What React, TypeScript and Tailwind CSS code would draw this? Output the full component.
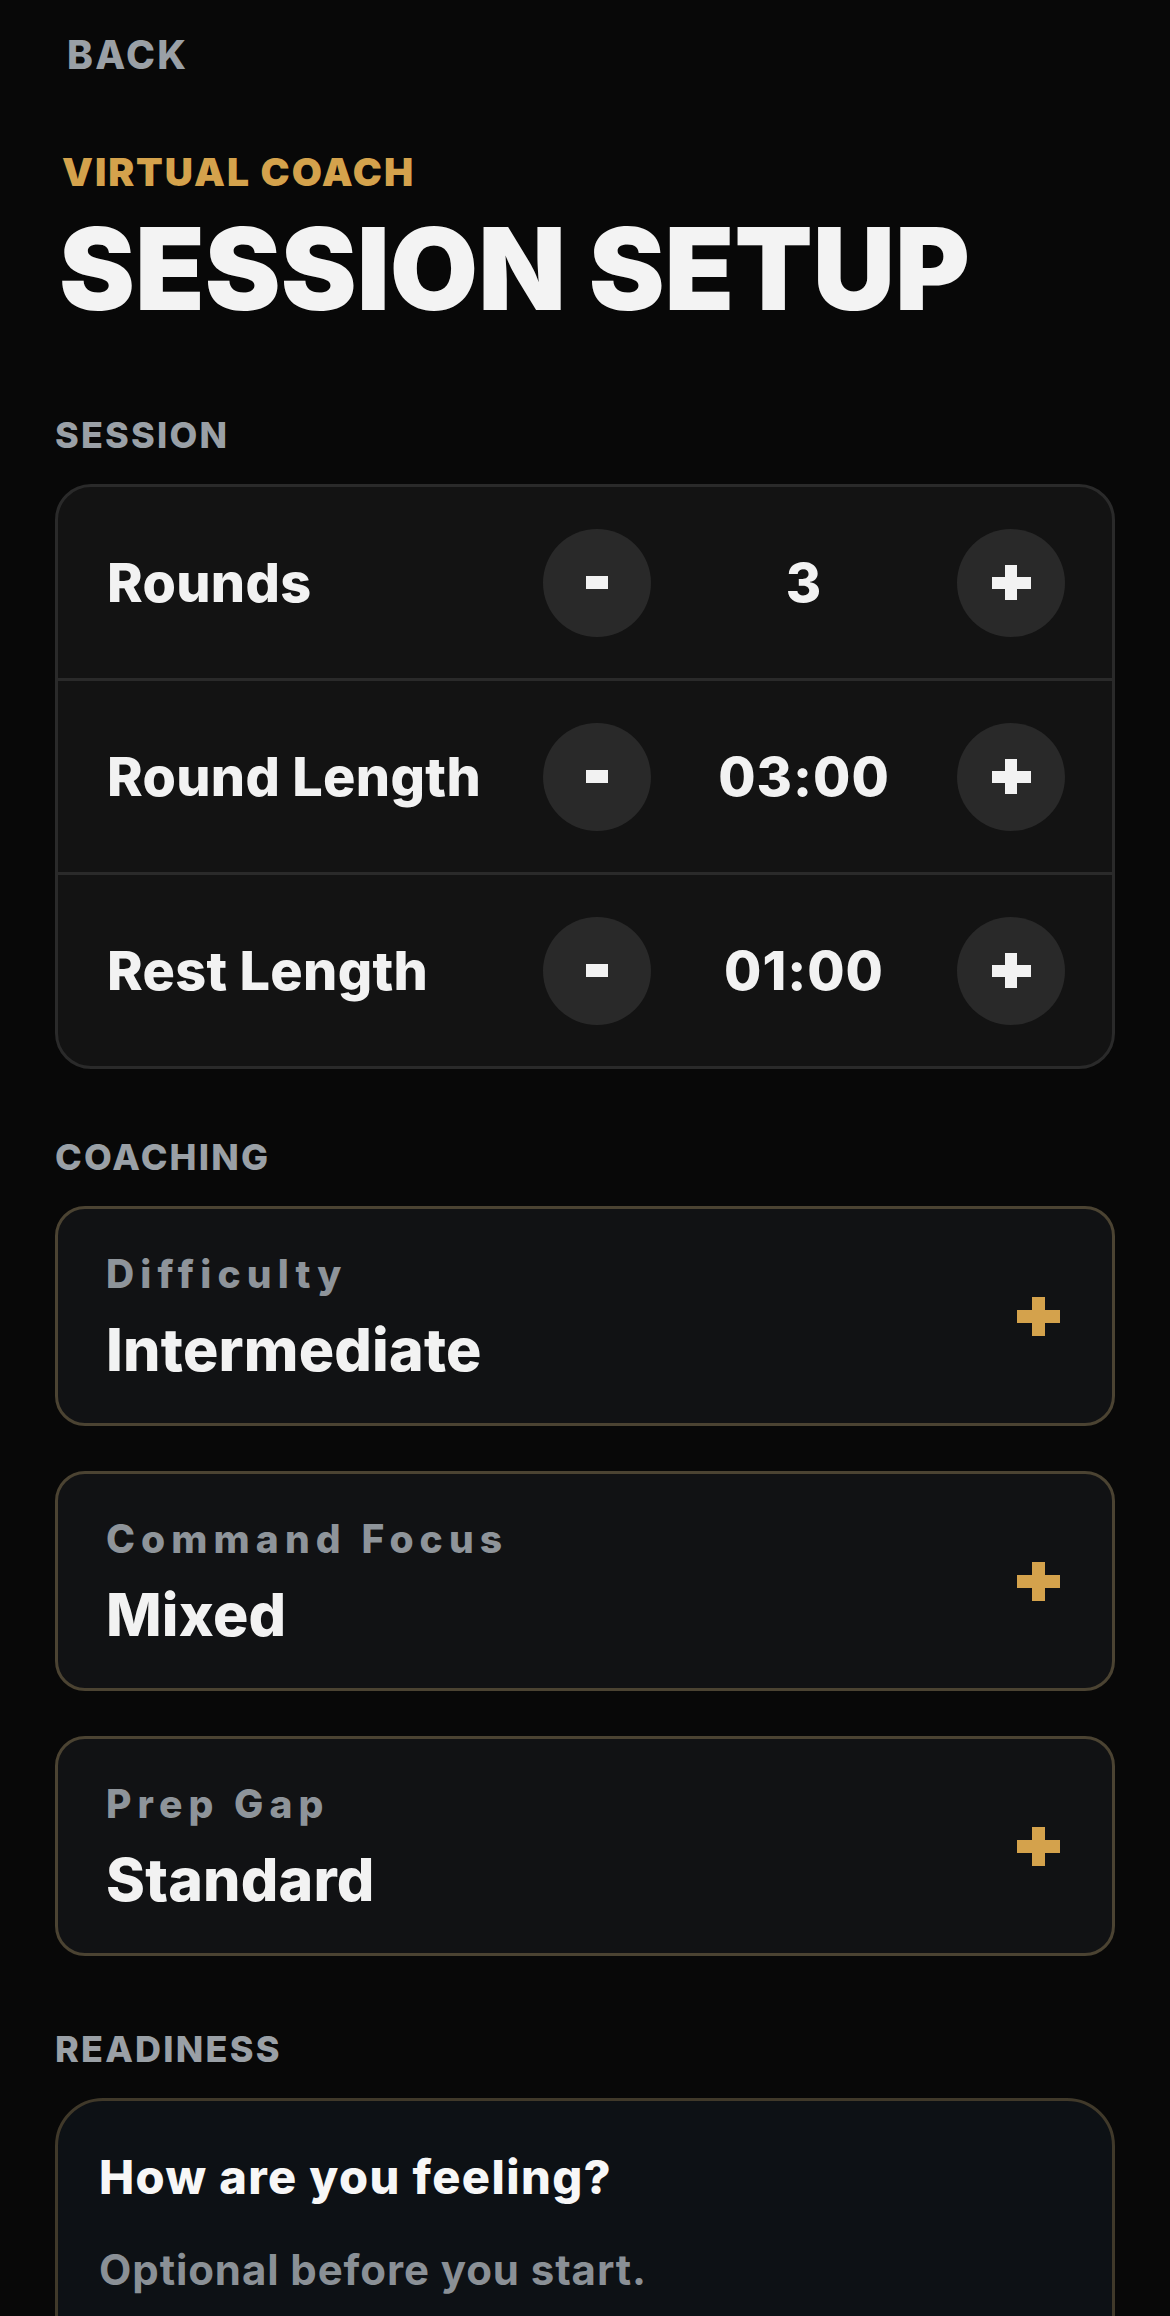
import React from "react";

function Cross({ w, h, t, color, vx, hy }: { w: number; h: number; t: number; color: string; vx: number; hy: number }) {
  return (
    <svg width={w} height={h} viewBox={`0 0 ${w} ${h}`} aria-hidden="true">
      <rect x={0} y={hy} width={w} height={t} fill={color} />
      <rect x={vx} y={0} width={t} height={h} fill={color} />
    </svg>
  );
}

function StepRow({ label, value }: { label: string; value: string }) {
  return (
    <div className="flex h-[191px] items-center pl-[49px] pr-[47px]">
      <div className="flex-1 text-[54px] leading-none font-extrabold tracking-[0.3px] text-[#f2f2f2]">{label}</div>
      <div className="flex items-center">
        <button aria-label="decrease" className="flex h-[108px] w-[108px] items-center justify-center rounded-full bg-[#292929]">
          <span className="block h-[13px] w-[22px] bg-[#f2f2f2]" />
        </button>
        <div className="w-[306px] text-center text-[54px] leading-none font-extrabold tracking-[1px] text-[#f2f2f2]">{value}</div>
        <button aria-label="increase" className="flex h-[108px] w-[108px] items-center justify-center rounded-full bg-[#292929]">
          <Cross w={39} h={35} t={12} vx={13} hy={12} color="#f2f2f2" />
        </button>
      </div>
    </div>
  );
}

function OptionCard({ label, value }: { label: string; value: string }) {
  return (
    <div className="flex h-[220px] items-center justify-between rounded-[30px] border-[3px] border-[#4b4332] bg-[#111214] pl-[48px] pr-[52px]">
      <div className="flex flex-col">
        <div className="text-[39px] leading-none font-extrabold tracking-[6.1px] text-[#8e949a]">{label}</div>
        <div className="mt-[27px] text-[59px] leading-none font-extrabold tracking-[0.2px] text-[#f2f2f2]">{value}</div>
      </div>
      <Cross w={43} h={39} t={13} vx={15} hy={13} color="#d4a24c" />
    </div>
  );
}

function SectionLabel({ children, className }: { children: React.ReactNode; className: string }) {
  return (
    <div className={`text-[36px] leading-none font-extrabold tracking-[2.2px] text-[#9aa0a6] ${className}`}>{children}</div>
  );
}

export default function App() {
  return (
    <div className="min-h-[2316px] w-full overflow-hidden bg-[#080808] px-[55px] font-['Inter','Noto_Sans',sans-serif]">
      <div className="pt-[35px] pl-[12px] text-[39px] leading-none font-extrabold tracking-[2.4px] text-[#9aa0a6]">BACK</div>
      <div className="mt-[78px] pl-[7px] text-[39px] leading-none font-black tracking-[1.9px] text-[#d4a24c]">VIRTUAL COACH</div>
      <h1 className="mt-[21px] pl-[4px] text-[114px] leading-none font-black text-[#f3f3f3]">SESSION SETUP</h1>

      <SectionLabel className="mt-[91px]">SESSION</SectionLabel>
      <div className="mt-[31px] overflow-hidden rounded-[36px] border-[3px] border-[#2a2a2a] bg-[#131313]">
        <StepRow label="Rounds" value="3" />
        <div className="h-[3px] bg-[#2a2a2a]" />
        <StepRow label="Round Length" value="03:00" />
        <div className="h-[3px] bg-[#2a2a2a]" />
        <StepRow label="Rest Length" value="01:00" />
      </div>

      <SectionLabel className="mt-[70px]">COACHING</SectionLabel>
      <div className="mt-[31px] flex flex-col gap-[45px]">
        <OptionCard label="Difficulty" value="Intermediate" />
        <OptionCard label="Command Focus" value="Mixed" />
        <OptionCard label="Prep Gap" value="Standard" />
      </div>

      <SectionLabel className="mt-[75px]">READINESS</SectionLabel>
      <div className="mt-[31px] rounded-[48px] border-[3px] border-[#40392a] bg-[#0d1115] px-[41px] pt-[52px] pb-[120px]">
        <div className="text-[47px] leading-none font-extrabold tracking-[1.4px] text-[#f7f7f7]">How are you feeling?</div>
        <div className="mt-[49px] text-[42px] leading-none font-bold tracking-[0.9px] text-[#8a9096]">Optional before you start.</div>
      </div>
    </div>
  );
}
